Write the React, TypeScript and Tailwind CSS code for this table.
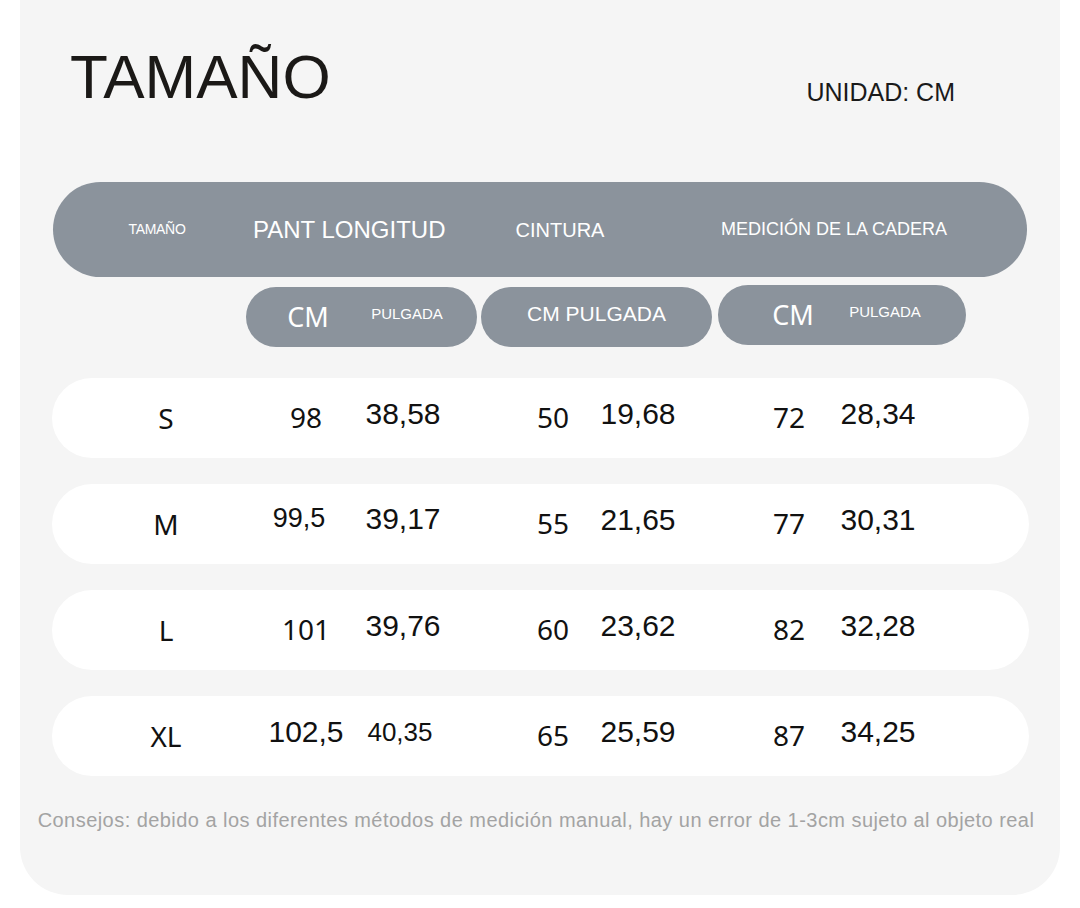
import React from "react";

type Cell = { v: string; lib?: boolean; size?: string; cls?: string };

const lefts = ["ml-[74px]", "ml-[60px]", "ml-[17px]", "ml-[70px]", "ml-[5px]", "ml-[71px]", "ml-[9px]"];

const rows: Cell[][] = [
  [
    { v: "S" },
    { v: "98", cls: "mt-[-2px]" },
    { v: "38,58", lib: true, cls: "mt-[-9px]" },
    { v: "50", cls: "mt-[-2px]" },
    { v: "19,68", lib: true, cls: "mt-[-9px]" },
    { v: "72", cls: "mt-[-2px]" },
    { v: "28,34", lib: true, cls: "mt-[-9px]" },
  ],
  [
    { v: "M" },
    { v: "99,5", lib: true, size: "text-[27px]", cls: "mt-[-12px] translate-x-[-7px]" },
    { v: "39,17", lib: true, cls: "mt-[-11px]" },
    { v: "55", cls: "mt-[-2px]" },
    { v: "21,65", lib: true, cls: "mt-[-9px]" },
    { v: "77", cls: "mt-[-2px]" },
    { v: "30,31", lib: true, cls: "mt-[-9px]" },
  ],
  [
    { v: "L" },
    { v: "101", cls: "mt-[-2px]" },
    { v: "39,76", lib: true, cls: "mt-[-9px]" },
    { v: "60", cls: "mt-[-2px]" },
    { v: "23,62", lib: true, cls: "mt-[-9px]" },
    { v: "82", cls: "mt-[-2px]" },
    { v: "32,28", lib: true, cls: "mt-[-9px]" },
  ],
  [
    { v: "XL" },
    { v: "102,5", lib: true, cls: "mt-[-8px]" },
    { v: "40,35", lib: true, size: "text-[26px]", cls: "mt-[-8px] translate-x-[-3px]" },
    { v: "65", cls: "mt-[-2px]" },
    { v: "25,59", lib: true, cls: "mt-[-9px]" },
    { v: "87", cls: "mt-[-2px]" },
    { v: "34,25", lib: true, cls: "mt-[-9px]" },
  ],
];

function DataRow({ cells }: { cells: Cell[] }) {
  return (
    <div className="flex h-[80px] items-center rounded-full bg-white">
      {cells.map((c, i) => (
        <div
          key={i}
          className={`${lefts[i]} w-[80px] shrink-0 whitespace-nowrap text-center leading-none text-[#111] ${
            c.lib ? "font-['Liberation_Sans',Arial,sans-serif]" : "font-['Noto_Sans',sans-serif]"
          } ${c.size ?? (c.lib ? "text-[30px]" : "text-[28px]")} ${c.cls ?? ""}`}
        >
          {c.v}
        </div>
      ))}
    </div>
  );
}

export default function App() {
  return (
    <div className="h-[908px] w-[1080px] overflow-hidden bg-white font-['Liberation_Sans',Arial,sans-serif]">
      <div className="mx-[20px] h-[895px] rounded-b-[48px] bg-[#f5f5f5] px-[32px]">
        {/* Title */}
        <div className="flex items-start justify-between">
          <h1 className="ml-[18px] mt-[46px] text-[62px] font-normal leading-none text-[#1b1917]">
            TAMAÑO
          </h1>
          <span className="mr-[73px] mt-[80px] text-[25px] leading-none text-[#1a1a1a]">
            UNIDAD: CM
          </span>
        </div>

        {/* Header pill */}
        <div className="ml-[1px] mr-[1px] mt-[74px] flex h-[95px] items-center whitespace-nowrap rounded-full bg-[#8b939c] text-white">
          <div className="w-[208px] text-center text-[14px] tracking-[-0.3px]">TAMAÑO</div>
          <div className="ml-[-8px] w-[192px] text-center text-[24px]">PANT LONGITUD</div>
          <div className="w-[230px] text-center text-[20px]">CINTURA</div>
          <div className="w-[318px] text-center text-[18px]">MEDICIÓN DE LA CADERA</div>
        </div>

        {/* Unit pills */}
        <div className="mt-[10px] flex items-start whitespace-nowrap pl-[194px] text-white">
          <div className="flex h-[60px] w-[231px] items-center rounded-full bg-[#8b939c]">
            <span className="w-[124px] text-center font-['Noto_Sans',sans-serif] text-[27px]">CM</span>
            <span className="w-[74px] pb-[6px] text-center text-[15px]">PULGADA</span>
          </div>
          <div className="ml-[4px] flex h-[60px] w-[231px] items-center justify-center rounded-full bg-[#8b939c] pb-[6px] text-[21px]">
            CM PULGADA
          </div>
          <div className="ml-[6px] mt-[-2px] flex h-[60px] w-[248px] items-center rounded-full bg-[#8b939c]">
            <span className="w-[150px] text-center font-['Noto_Sans',sans-serif] text-[27px]">CM</span>
            <span className="ml-[-20px] w-[74px] pb-[6px] text-center text-[15px]">PULGADA</span>
          </div>
        </div>

        {/* Data rows */}
        <div className="mr-[-1px] mt-[31px] flex flex-col gap-[26px]">
          {rows.map((r, i) => (
            <DataRow key={i} cells={r} />
          ))}
        </div>

        {/* Footer note */}
        <p className="ml-[-18px] mr-[-10px] mt-[34px] whitespace-nowrap text-center text-[20px] leading-none tracking-[0.45px] text-[#a3a3a3]">
          Consejos: debido a los diferentes métodos de medición manual, hay un error de 1-3cm sujeto al objeto real
        </p>
      </div>
    </div>
  );
}
